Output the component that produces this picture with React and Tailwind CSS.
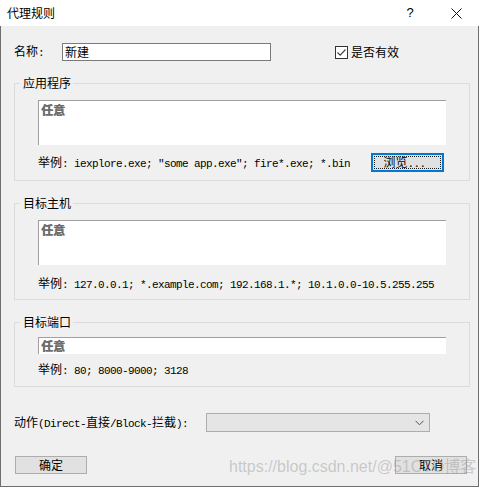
import React from 'react'

const mono = "font-['Liberation_Mono',monospace] text-[11px] tracking-[-0.6px] whitespace-pre"
const line = 'border-[#dcdcdc]'

// SimSun-style: ascii is half width, so render ascii runs in a mono face
function Mixed({ text }) {
  const parts = text.match(/[\x20-\x7e]+|[^\x20-\x7e]+/g) || []
  return parts.map((p, i) =>
    /^[\x20-\x7e]/.test(p)
      ? <span key={i} className={mono}>{p}</span>
      : <span key={i}>{p}</span>
  )
}

function Group({ title, children, bodyClass }) {
  return (
    <div className="w-[456px] flex flex-col">
      <div className="flex h-[12px]">
        <div className={'w-[6px] h-[6px] self-end border-t border-l ' + line} />
        <span className="pl-[3px] pr-[2px] leading-[12px]">{title}</span>
        <div className={'flex-1 h-[6px] self-end border-t border-r ' + line} />
      </div>
      <div className={'border-x border-b pl-[23px] pr-[23px] ' + line + ' ' + bodyClass}>{children}</div>
    </div>
  )
}

function AnyBox({ tall }) {
  return (
    <div className={(tall ? 'h-[45px] pt-[3px] ' : 'h-[17px] pt-[2px] ') + 'w-[408px] bg-white border-t border-l border-[#a0a0a0] pl-[2px] font-bold text-[#6d6d6d] [text-shadow:0.6px_0_0_#6d6d6d]'}>
      任意
    </div>
  )
}

function Example({ text, children }) {
  return (
    <div className="h-[19px] flex items-center">
      <span><Mixed text={text} /></span>
      {children}
    </div>
  )
}

export default function App() {
  return (
    <div className="w-[482px] h-[490px] bg-white relative overflow-hidden font-['Noto_Sans_CJK_SC',sans-serif] text-[12px] leading-[12px] text-black">
      <div className="w-[479px] h-[487px] flex flex-col">
        {/* title bar */}
        <div className="h-[26px] bg-white flex items-center">
          <span className="pl-[7px] text-[12px]">代理规则</span>
          <div className="ml-auto flex h-full">
            <div className="w-[46px] flex items-center justify-center font-['Liberation_Sans',sans-serif] text-[13px]">?</div>
            <div className="w-[46px] flex items-center justify-center">
              <svg width="11" height="11" viewBox="0 0 11 11">
                <path d="M0.5 0.5 L10.5 10.5 M10.5 0.5 L0.5 10.5" stroke="#111" strokeWidth="1" />
              </svg>
            </div>
          </div>
        </div>

        <div className="flex-1 bg-[#f0f0f0] border-x border-b border-[#6e6e6e] pl-[13px] flex flex-col">
          {/* name row */}
          <div className="mt-[17px] h-[18px] flex items-center">
            <span className="w-[48px]"><Mixed text="名称:" /></span>
            <div className="w-[209px] h-[18px] bg-white border border-[#7a7a7a] pl-[2px] flex items-center">新建</div>
            <div className="ml-[64px] w-[13px] h-[13px] bg-white border border-[#333] flex items-center justify-center">
              <svg width="11" height="11" viewBox="0 0 11 11">
                <path d="M1.5 5.5 L4.2 8.2 L9.5 2.5" fill="none" stroke="#444" strokeWidth="1.2" />
              </svg>
            </div>
            <span className="ml-[3px]">是否有效</span>
          </div>

          <div className="mt-[16px]">
            <Group title="应用程序" bodyClass="pt-[11px] pb-[8px]">
              <AnyBox tall />
              <div className="mt-[8px]">
                <Example text={'举例: iexplore.exe; "some app.exe"; fire*.exe; *.bin'}>
                  <div className="ml-auto mr-[2px] w-[73px] h-[19px] border-2 border-[#0078d7] bg-[#e1e1e1] p-[1px]">
                    <div className="w-full h-full border border-dotted border-[#222] flex items-center justify-center">
                      <span className="-ml-[6px]"><Mixed text="浏览..." /></span>
                    </div>
                  </div>
                </Example>
              </div>
            </Group>
          </div>

          <div className="mt-[16px]">
            <Group title="目标主机" bodyClass="pt-[11px] pb-[6px]">
              <AnyBox tall />
              <div className="mt-[9px]">
                <Example text="举例: 127.0.0.1; *.example.com; 192.168.1.*; 10.1.0.0-10.5.255.255" />
              </div>
            </Group>
          </div>

          <div className="mt-[16px]">
            <Group title="目标端口" bodyClass="pt-[9px] pb-[7px]">
              <AnyBox />
              <div className="mt-[6px]">
                <Example text="举例: 80; 8000-9000; 3128" />
              </div>
            </Group>
          </div>

          {/* action row */}
          <div className="mt-[26px] h-[19px] flex items-center">
            <span className="w-[192px]"><Mixed text="动作(Direct-直接/Block-拦截):" /></span>
            <div className="w-[224px] h-[19px] bg-[#e5e5e5] border border-[#adadad] flex items-center justify-end pr-[5px]">
              <svg width="9" height="6" viewBox="0 0 9 6">
                <path d="M0.5 0.8 L4.5 4.8 L8.5 0.8" fill="none" stroke="#555" strokeWidth="1" />
              </svg>
            </div>
          </div>

          {/* buttons */}
          <div className="mt-[24px] w-[456px] h-[18px] flex justify-between">
            <div className="ml-[1px] w-[72px] h-[18px] bg-[#e1e1e1] border border-[#adadad] flex items-center justify-center">确定</div>
            <div className="mr-[3px] w-[72px] h-[18px] bg-[#e1e1e1] border border-[#adadad] flex items-center justify-center">取消</div>
          </div>
        </div>
      </div>

      {/* watermark */}
      <div className="absolute left-[229px] top-[457px] font-['Liberation_Sans','Noto_Sans_CJK_SC',sans-serif] text-[16px] leading-[20px] text-[rgba(150,150,150,0.45)] whitespace-nowrap">
        https://blog.csdn.net/@51CTO博客
      </div>
    </div>
  )
}
